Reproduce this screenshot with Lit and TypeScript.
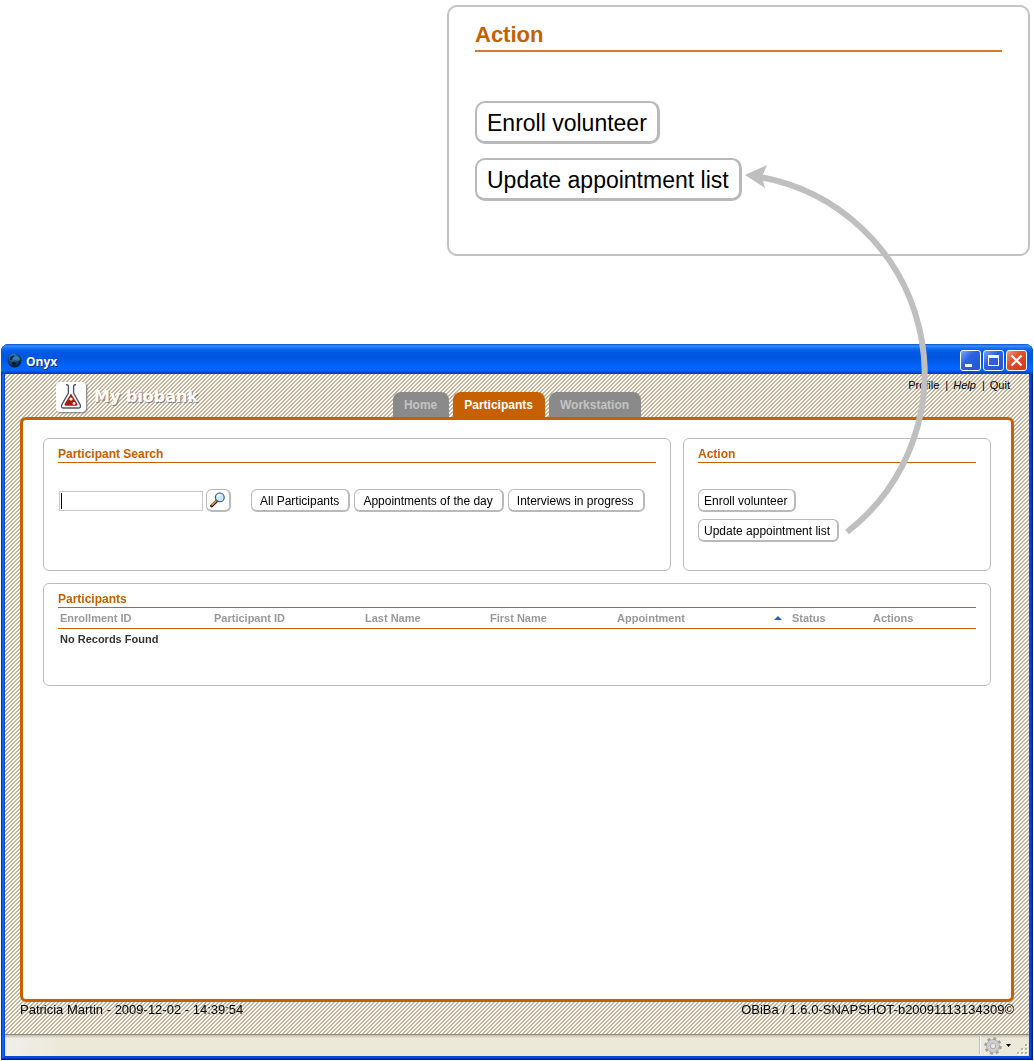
import { LitElement, html, svg, css } from "lit";
import { customElement, property } from "lit/decorators.js";

const columns = [
  { label: "Enrollment ID", width: 154 },
  { label: "Participant ID", width: 151 },
  { label: "Last Name", width: 125 },
  { label: "First Name", width: 127 },
  { label: "Appointment", width: 175, sorted: true },
  { label: "Status", width: 81 },
  { label: "Actions", width: 105 },
];

const globeIcon = svg`
  <svg class="globe" width="15" height="15" viewBox="0 0 15 15" aria-hidden="true">
    <defs>
      <radialGradient id="sea" cx="0.4" cy="0.25" r="0.8">
        <stop offset="0" stop-color="#4aa3d8" />
        <stop offset="0.45" stop-color="#124a80" />
        <stop offset="1" stop-color="#021026" />
      </radialGradient>
    </defs>
    <circle cx="7.5" cy="7.5" r="7" fill="url(#sea)" />
    <path d="M3 4l3-2 2 1-2 2-1 2-2 0z" fill="#0a2b50" />
    <path d="M9 3l3 1 1 3-3 1-2-2z" fill="#3f93b8" opacity="0.7" />
    <path d="M5 9l3 0 1 2-2 2-2-2z" fill="#041a38" />
  </svg>`;

const flaskIcon = svg`
  <svg class="flask" width="30" height="30" viewBox="0 0 30 30" aria-hidden="true">
    <path d="M15 11.5l-6.400 10.600q-.500 1.700 1 1.700h10.800q1.500 0 1-1.700z" fill="#a81c14" />
    <path d="M10 2.800h1.200q1.200 .200 1.200 1.400V11L6 22.300q-1.600 3.700 1.800 3.700h14.400q3.400 0 1.800-3.700L17.600 11V4.200q0-1.200 1.200-1.400H20"
      fill="none" stroke="#4a5a66" stroke-width="1.4" stroke-linejoin="round" />
    <circle cx="15" cy="17" r="1.6" fill="#fff" />
    <circle cx="18" cy="21.400" r="1.300" fill="#fff" />
  </svg>`;

const magnifierIcon = svg`
  <svg width="16" height="16" viewBox="0 0 16 16" aria-hidden="true">
    <path d="M1.600 13.800l5.400-5.200" stroke="#1c1208" stroke-width="3" stroke-linecap="round" />
    <path d="M2 12.800l4.400-4.200" stroke="#f29420" stroke-width="1.700" stroke-linecap="round" />
    <circle cx="9.800" cy="5.400" r="4.400" fill="#c9e8fa" stroke="#3c5878" stroke-width="1.100" />
    <path d="M7.400 5.200a2.800 2.800 0 0 1 3-2.400" fill="none" stroke="#fff" stroke-width="1.500" />
  </svg>`;

const gearIcon = svg`
  <svg width="18" height="18" viewBox="0 0 16 16" aria-hidden="true">
    <circle cx="8" cy="8" r="6.400" fill="none" stroke="#a0a0a0" stroke-width="2.800" stroke-dasharray="2.500 2.527" />
    <circle cx="8" cy="8" r="4" fill="none" stroke="#a0a0a0" stroke-width="4.200" />
    <circle cx="8" cy="8" r="4" fill="none" stroke="#cdcdcd" stroke-width="3" />
    <circle cx="8" cy="8" r="1.800" fill="#ece9d8" />
  </svg>`;

const gripIcon = svg`
  <svg class="grip" width="12" height="12" viewBox="0 0 12 12" aria-hidden="true">
    ${[[8, 0], [4, 4], [8, 4], [0, 8], [4, 8], [8, 8]].map(
      ([x, y]) => svg`
        <rect x=${x + 1} y=${y + 1} width="2" height="2" fill="#fff" />
        <rect x=${x} y=${y} width="2" height="2" fill="#b8b4a2" />`
    )}
  </svg>`;

@customElement("soft-button")
export class SoftButton extends LitElement {
  @property() label = "";
  @property() size = "normal";

  static styles = css`
    :host {
      display: block;
    }
    .button {
      display: flex;
      align-items: center;
      justify-content: center;
      box-sizing: border-box;
      height: 23px;
      margin: 0;
      padding: 1px 9px 0 8px;
      border: 1px solid #b9b9b9;
      border-right-width: 2px;
      border-bottom-width: 2px;
      border-radius: 6px;
      background: #fff;
      color: #000;
      font: 12px "Liberation Sans", Arial, sans-serif;
      white-space: nowrap;
    }
    .tight {
      padding: 1px 7px 0 5px;
    }
    .icon {
      width: 25px;
      padding: 0;
    }
    .large {
      height: 43px;
      padding: 2px 10px 0;
      border-width: 2px 3px 3px 2px;
      border-radius: 10px;
      font-size: 23px;
    }
  `;

  render() {
    return html`<button class="button ${this.size}" type="button" aria-label=${this.label}>
      ${this.size === "icon" ? magnifierIcon : this.label}
    </button>`;
  }
}

@customElement("app-root")
export class AppRoot extends LitElement {
  static styles = css`
    :host {
      position: relative;
      display: flex;
      flex-direction: column;
      box-sizing: border-box;
      min-height: 100vh;
      padding: 5px 1px 1px;
      background: #fff;
      color: #000;
      font: 12px "Liberation Sans", Arial, sans-serif;
    }
    h2 {
      margin: 0;
      color: #c66000;
      font-size: 12px;
      line-height: 15px;
      border-bottom: 1px solid #c66000;
    }

    .callout {
      align-self: flex-end;
      box-sizing: border-box;
      width: 100%;
      max-width: 583px;
      margin: 0 3px 88px 0;
      padding: 15px 26px 53px;
      border: 2px solid #c3c3c3;
      border-radius: 10px;
    }
    .callout h2 {
      margin-bottom: 49px;
      padding-bottom: 2px;
      font-size: 22px;
      line-height: 26px;
      border-bottom: 2px solid #d67a33;
    }
    .stack {
      display: flex;
      flex-direction: column;
      align-items: flex-start;
      gap: 7px;
    }
    .callout .stack {
      gap: 14px;
    }

    .window {
      flex: 1;
      display: flex;
      flex-direction: column;
      border-radius: 8px 8px 0 0;
      background: #0a48d8;
      padding: 0 4px 4px;
      box-shadow: inset 1px 0 #0a30c0, inset -1px -1px #001a90, inset -2px -2px #0030c4, inset 3px 0 #1260f0;
    }
    .titlebar {
      display: flex;
      align-items: center;
      gap: 2px;
      height: 30px;
      box-sizing: border-box;
      margin: 0 -4px;
      padding: 3px 6px 0;
      border-radius: 8px 8px 0 0;
      background: linear-gradient(#0a50c8 0, #3a90ff 2px, #1470f4 4px, #0058e4 8px, #0056e0 14px, #0064fa 22px, #0066ff 26px, #0044cc 29px, #0038b0 30px);
    }
    .caption {
      flex: 1;
      margin-left: 2px;
      padding-top: 1px;
      color: #fff;
      font: bold 12px "Open Sans", sans-serif;
      text-shadow: 1px 1px #0a2a80;
    }
    .control {
      width: 21px;
      height: 21px;
      padding: 0;
      box-sizing: border-box;
      border: 1px solid #fff;
      border-radius: 3px;
      background: linear-gradient(135deg, #7ba4f4, #2c62e4 40%, #2254d8);
    }
    .control svg {
      display: block;
    }
    .close {
      background: linear-gradient(135deg, #f09a80, #e0502c 40%, #c83c18);
    }

    .page {
      flex: 1;
      display: flex;
      flex-direction: column;
      background-color: #fff;
      background-image: linear-gradient(135deg, #c3b69c 0 25%, #fbfaf7 25% 50%, #c3b69c 50% 75%, #fbfaf7 75%);
      background-size: 4px 4px;
    }
    .header {
      display: grid;
      grid-template-columns: 1fr auto 1fr;
      height: 43px;
    }
    .brand {
      display: flex;
      align-items: center;
      gap: 8px;
      padding: 2px 0 0 51px;
      color: #fff;
      font: bold 16px "DejaVu Sans", Verdana, sans-serif;
      text-shadow: 1px 1px 1px #777;
    }
    .flask {
      border-radius: 4px;
      background: #fff;
      box-shadow: 1px 1px 2px #777;
    }
    .tabs {
      display: flex;
      align-items: flex-end;
      gap: 4px;
    }
    .tab {
      padding: 1px 12px 0 11px;
      border-radius: 8px 8px 0 0;
      background: #8a8a8a;
      color: #c3c3c3;
      font-weight: bold;
      line-height: 24px;
      text-decoration: none;
    }
    .selected {
      background: #c66000;
      color: #fff;
    }
    .links {
      padding: 5px 19px 0 0;
      font-size: 11px;
      line-height: 13px;
      text-align: right;
    }
    .links a {
      color: #000;
      text-decoration: none;
    }
    .bar {
      margin-left: 6px;
      margin-right: 2px;
    }

    .sheet {
      flex: 1;
      display: grid;
      grid-template-columns: 628fr 308fr;
      align-content: start;
      gap: 12px;
      margin: 0 15px;
      padding: 18px 20px;
      border: 3px solid #c66000;
      border-radius: 6px;
      background: #fff;
    }
    .panel {
      padding: 8px 14px 28px;
      border: 1px solid #bcbcbc;
      border-radius: 6px;
    }
    .panel .stack,
    .search {
      margin-top: 26px;
    }
    .search {
      display: flex;
      align-items: center;
      gap: 3px;
    }
    .query {
      box-sizing: border-box;
      width: 144px;
      height: 20px;
      margin-left: 1px;
      padding: 1px 2px;
      border: 1px solid #c8c8c8;
      border-radius: 0;
      outline: none;
      font: inherit;
      caret-color: transparent;
      background: linear-gradient(#000, #000) 1px 1px / 1px 16px no-repeat #fff;
    }
    .filters {
      display: flex;
      gap: 4px;
      margin-left: 17px;
    }
    .list {
      grid-column: 1 / -1;
      padding-bottom: 36px;
    }
    table {
      width: 100%;
      table-layout: fixed;
      border-collapse: collapse;
      font-size: 11px;
      font-weight: bold;
    }
    th,
    td {
      height: 20px;
      padding: 0 2px;
      text-align: left;
      line-height: 20px;
    }
    th {
      color: #999;
      border-bottom: 1px solid #c66000;
    }
    td {
      color: #333;
    }
    .head {
      display: flex;
      align-items: center;
      justify-content: space-between;
      padding-right: 6px;
    }

    .footer {
      display: flex;
      justify-content: space-between;
      height: 32px;
      padding: 0 15px;
      font-size: 13px;
      line-height: 15px;
    }
    .status {
      display: flex;
      align-items: center;
      justify-content: flex-end;
      height: 22px;
      border-top: 1px solid #8a877a;
      box-sizing: border-box;
      box-shadow: inset 0 2px 2px #c8c5b4;
      background: linear-gradient(90deg, #f0efeb, #ece9d8 60px);
    }
    .tools {
      display: flex;
      align-items: center;
      gap: 4px;
      height: 19px;
      margin-right: 6px;
      padding: 0 0 0 3px;
      border: 0;
      border-left: 1px solid #fff;
      box-shadow: -1px 0 #c5c2b0;
      background: none;
    }
    .grip {
      align-self: flex-end;
    }

    .pointer {
      position: absolute;
      top: 0;
      right: 84px;
      pointer-events: none;
    }
  `;

  firstUpdated() {
    this.renderRoot.querySelector<HTMLInputElement>(".query")?.focus();
  }

  render() {
    return html`
      <section class="callout">
        <h2>Action</h2>
        <div class="stack">
          <soft-button size="large" label="Enroll volunteer"></soft-button>
          <soft-button size="large" label="Update appointment list"></soft-button>
        </div>
      </section>

      <div class="window">
        <div class="titlebar">
          ${globeIcon}
          <span class="caption">Onyx</span>
          <button class="control" aria-label="Minimize">
            <svg width="19" height="19"><path d="M4 13h7v3H4z" fill="#fff" /></svg>
          </button>
          <button class="control" aria-label="Maximize">
            <svg width="19" height="19">
              <path d="M4 4h11v11H4zM5 7v7h9V7z" fill="#fff" fill-rule="evenodd" />
            </svg>
          </button>
          <button class="control close" aria-label="Close">
            <svg width="19" height="19"><path d="M4.500 4.500l10 10M14.500 4.500l-10 10" stroke="#fff" stroke-width="2.200" /></svg>
          </button>
        </div>

        <div class="page">
          <header class="header">
            <div class="brand">${flaskIcon}<span>My biobank</span></div>
            <nav class="tabs">
              <a class="tab" href="#home">Home</a>
              <a class="tab selected" href="#participants">Participants</a>
              <a class="tab" href="#workstation">Workstation</a>
            </nav>
            <div class="links">
              <a href="#profile">Profile</a><span class="bar">|</span>
              <a href="#help"><i>Help</i></a><span class="bar">|</span>
              <a href="#quit">Quit</a>
            </div>
          </header>

          <main class="sheet">
            <section class="panel">
              <h2>Participant Search</h2>
              <div class="search">
                <input class="query" type="text" aria-label="Participant search" />
                <soft-button size="icon" label="Search"></soft-button>
                <div class="filters">
                  <soft-button label="All Participants"></soft-button>
                  <soft-button label="Appointments of the day"></soft-button>
                  <soft-button label="Interviews in progress"></soft-button>
                </div>
              </div>
            </section>
            <section class="panel">
              <h2>Action</h2>
              <div class="stack">
                <soft-button size="tight" label="Enroll volunteer"></soft-button>
                <soft-button size="tight" label="Update appointment list"></soft-button>
              </div>
            </section>
            <section class="panel list">
              <h2>Participants</h2>
              <table>
                <colgroup>
                  ${columns.map((c) => html`<col style="width:${c.width}px" />`)}
                </colgroup>
                <thead>
                  <tr>
                    ${columns.map(
                      (c) => html`<th scope="col">
                        <div class="head">
                          ${c.label}
                          ${c.sorted
                            ? html`<svg width="8" height="4" aria-hidden="true"><path d="M4 0l4 4H0z" fill="#2a5cc8" /></svg>`
                            : ""}
                        </div>
                      </th>`
                    )}
                  </tr>
                </thead>
                <tbody>
                  <tr>
                    <td colspan=${columns.length}>No Records Found</td>
                  </tr>
                </tbody>
              </table>
            </section>
          </main>

          <footer class="footer">
            <span>Patricia Martin - 2009-12-02 - 14:39:54</span>
            <span>OBiBa / 1.6.0-SNAPSHOT-b20091113134309©</span>
          </footer>
        </div>

        <div class="status">
          <button class="tools" aria-label="Settings">
            ${gearIcon}
            <svg width="5" height="3" aria-hidden="true"><path d="M0 0h5l-2.500 3z" fill="#000" /></svg>
          </button>
          ${gripIcon}
        </div>
      </div>

      <svg class="pointer" width="210" height="550" viewBox="740 0 210 550" aria-hidden="true">
        <path d="M760 177A200 200 0 0 1 847 532" fill="none" stroke="#bfbfbf" stroke-width="6" />
        <path d="M745 175l22-10-5 12 3 11z" fill="#bfbfbf" />
      </svg>
    `;
  }
}
